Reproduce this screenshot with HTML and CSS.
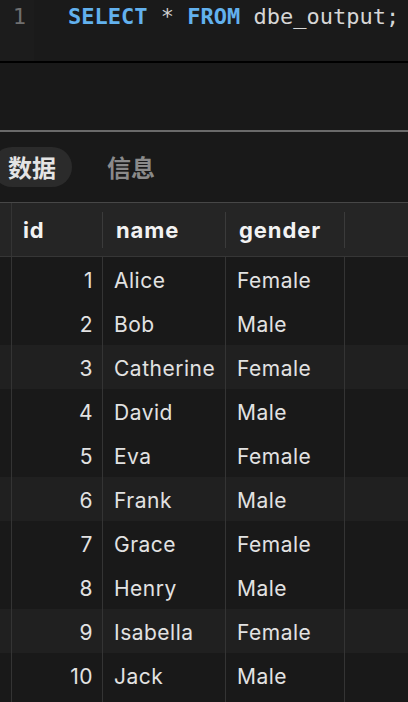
FILE: index.html
```html
<!DOCTYPE html>
<html lang="zh">
<head>
<meta charset="utf-8">
<link rel="stylesheet" href="styles.css">
</head>
<body>
<div class="editor">
  <div class="gutter">1</div>
  <div class="code"><span class="kw">SELECT</span> <span class="op">*</span> <span class="kw">FROM</span> dbe_output;</div>
</div>
<div class="spacer"></div>
<div class="tabs">
  <div class="tab active">数据</div>
  <div class="tab">信息</div>
</div>
<div class="grid">
  <div class="row head">
    <div class="lead"></div>
    <div class="cell">id</div>
    <div class="cell">name</div>
    <div class="cell">gender</div>
    <div class="cell"></div>
  </div>
  <div class="row"><div class="lead"></div><div class="cell num">1</div><div class="cell">Alice</div><div class="cell">Female</div><div class="cell"></div></div>
  <div class="row"><div class="lead"></div><div class="cell num">2</div><div class="cell">Bob</div><div class="cell">Male</div><div class="cell"></div></div>
  <div class="row alt"><div class="lead"></div><div class="cell num">3</div><div class="cell">Catherine</div><div class="cell">Female</div><div class="cell"></div></div>
  <div class="row"><div class="lead"></div><div class="cell num">4</div><div class="cell">David</div><div class="cell">Male</div><div class="cell"></div></div>
  <div class="row"><div class="lead"></div><div class="cell num">5</div><div class="cell">Eva</div><div class="cell">Female</div><div class="cell"></div></div>
  <div class="row alt"><div class="lead"></div><div class="cell num">6</div><div class="cell">Frank</div><div class="cell">Male</div><div class="cell"></div></div>
  <div class="row"><div class="lead"></div><div class="cell num">7</div><div class="cell">Grace</div><div class="cell">Female</div><div class="cell"></div></div>
  <div class="row"><div class="lead"></div><div class="cell num">8</div><div class="cell">Henry</div><div class="cell">Male</div><div class="cell"></div></div>
  <div class="row alt"><div class="lead"></div><div class="cell num">9</div><div class="cell">Isabella</div><div class="cell">Female</div><div class="cell"></div></div>
  <div class="row"><div class="lead"></div><div class="cell num">10</div><div class="cell">Jack</div><div class="cell">Male</div><div class="cell"></div></div>
  <div class="row"><div class="lead"></div><div class="cell num"></div><div class="cell"></div><div class="cell"></div><div class="cell"></div></div>
</div>
</body>
</html>
```
FILE: styles.css
```css
html, body {
  margin: 0;
  padding: 0;
  background: #191919;
  width: 408px;
  height: 702px;
  overflow: hidden;
}
body {
  font-family: Inter, "Noto Sans CJK SC", sans-serif;
  color: #e2e2e2;
}
.editor {
  display: flex;
  height: 61px;
  background: #1a1a1a;
  border-bottom: 2px solid #000;
}
.gutter {
  width: 34px;
  background: #1c1c1c;
  font-family: "DejaVu Sans Mono", monospace;
  font-size: 22px;
  line-height: 34px;
  color: #6f6f6f;
  text-align: right;
  padding-right: 8px;
  box-sizing: border-box;
}
.code {
  padding-left: 34px;
  font-family: "DejaVu Sans Mono", monospace;
  font-size: 22px;
  line-height: 34px;
  color: #d6d6d6;
  white-space: pre;
}
.kw {
  color: #62b1ee;
  font-weight: bold;
}
.op {
  color: #cfcfcf;
}
.spacer {
  height: 67px;
  border-bottom: 2px solid #6a6a6a;
}
.tabs {
  display: flex;
  align-items: center;
  gap: 19px;
  height: 70px;
  margin-left: -8px;
}
.tab {
  height: 40px;
  line-height: 40px;
  padding: 0 16px;
  border-radius: 20px;
  font-family: "Noto Sans CJK SC", sans-serif;
  font-size: 24px;
  font-weight: 700;
  color: #8a8a8a;
}
.tab.active {
  background: #2b2b2b;
  color: #e4e4e4;
}
.grid {
  border-top: 1px solid #474747;
}
.row {
  display: grid;
  grid-template-columns: 11px 91px 123px 119px 1fr;
  height: 44px;
  overflow: hidden;
}
.row.alt {
  background: #202020;
}
.cell {
  border-left: 1px solid #343434;
  padding-left: 11px;
  font-size: 21px;
  letter-spacing: 0.5px;
  line-height: 47px;
  white-space: nowrap;
  overflow: hidden;
}
.cell.num {
  text-align: right;
  padding-left: 0;
  padding-right: 9px;
}
.row.head {
  height: 53px;
  background: #252525;
  border-bottom: 1px solid #363636;
}
.row.head .cell {
  line-height: 55px;
  font-weight: 700;
  font-size: 22px;
  letter-spacing: 0.9px;
  color: #f2f2f2;
  padding-left: 14px;
  border-left: none;
  background: linear-gradient(#3b3b3b, #3b3b3b) left center / 1px 36px no-repeat;
}
.row.head .cell:nth-child(2) {
  padding-left: 12px;
  background: linear-gradient(#343434, #343434) left top / 1px 100% no-repeat;
}
```
